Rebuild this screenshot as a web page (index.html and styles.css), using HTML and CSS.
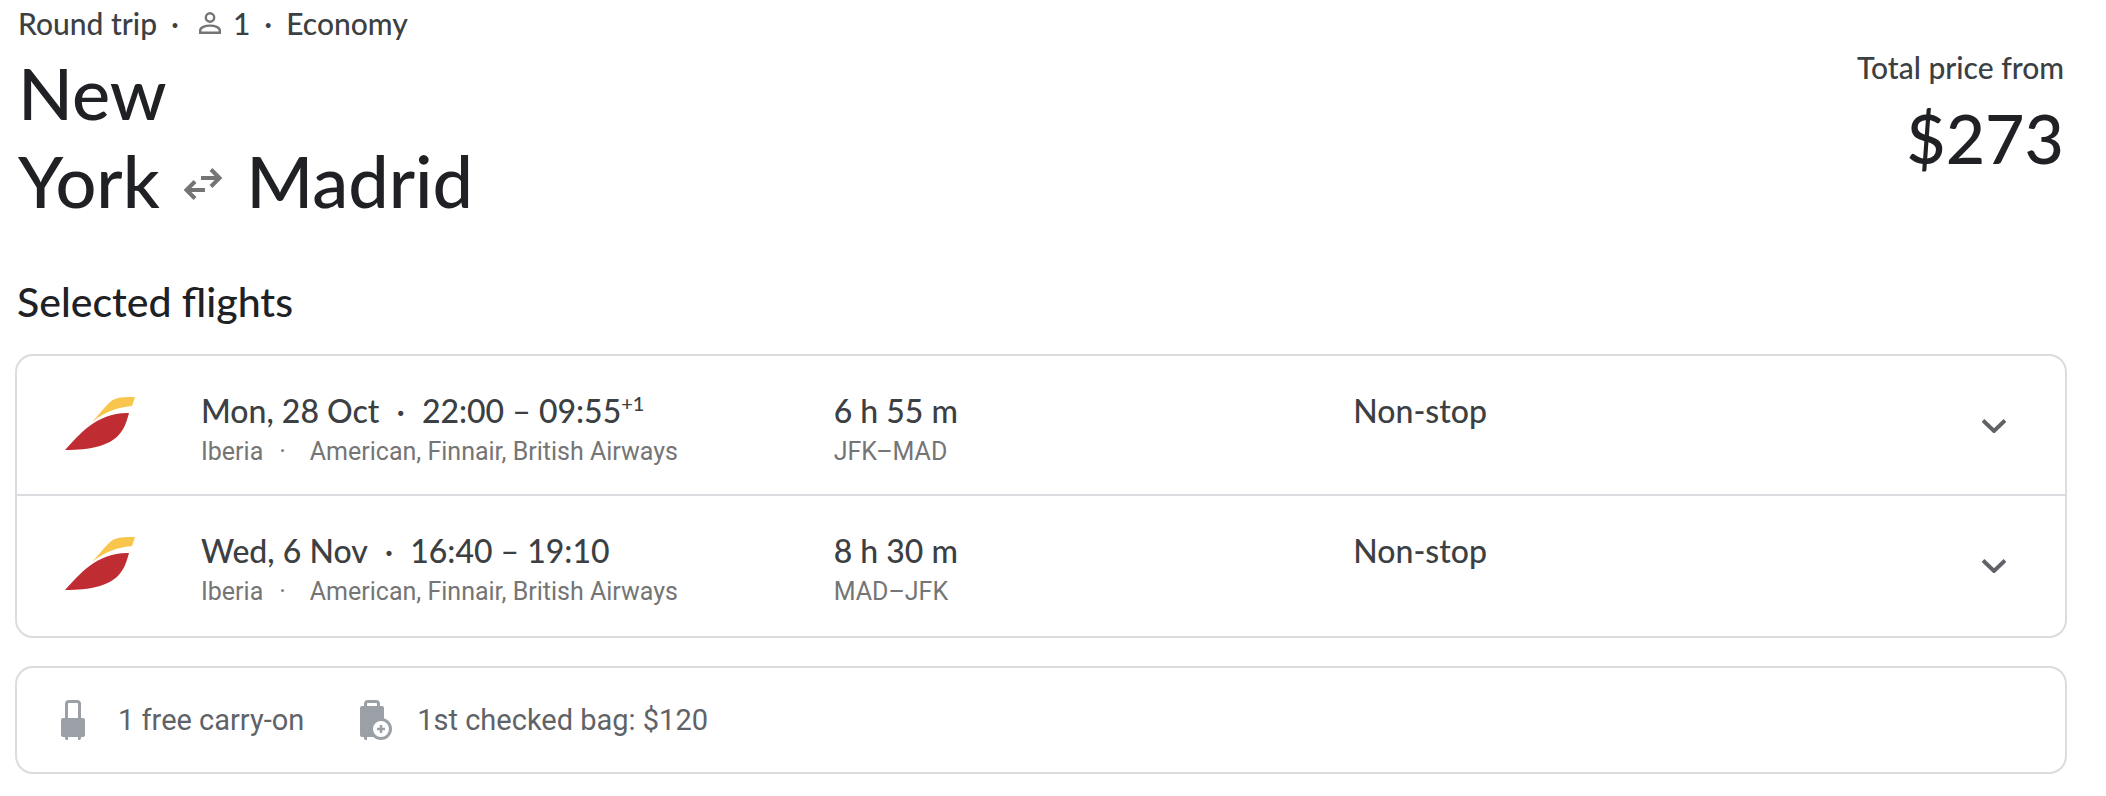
FILE: index.html
```
<!doctype html>
<html lang="en">
  <head>
    <meta charset="utf-8">
    <meta name="viewport" content="width=device-width, initial-scale=1.0">
    <title>New York to Madrid</title>
    <link rel="stylesheet" href="styles.css">
  </head>
  <body>
    <svg class="sprite" width="0" height="0" aria-hidden="true">
      <symbol id="iberia" viewBox="0 0 70 53">
        <path fill="#bf2c32" d="M0 53C14 38 32 15 64 16C59 34 54 53 0 53Z"/>
        <path fill="#f8c64c" d="M27 25C38 13 44 4 50 2C55 0 62 0 70 0L67 9C51 11 41 14 27 25Z"/>
      </symbol>
      <symbol id="chevron" viewBox="0 0 24 14">
        <path fill="none" stroke="#5f6368" stroke-width="4" d="M1 1.500L12 12L23 1.500"/>
      </symbol>
    </svg>

    <header class="trip">
      <div class="trip-info">
        <div class="meta">
          <span>Round trip</span>
          <span class="dot">·</span>
          <span class="people">
            <svg width="22" height="22" viewBox="0 0 22 22" fill="none" stroke="#757575" stroke-width="2.400"><circle cx="11" cy="5.500" r="4.200"/><path d="M1.200 20.800V18.500C1.200 12 20.800 12 20.800 18.500V20.800Z"/></svg>
            1
          </span>
          <span class="dot">·</span>
          <span>Economy</span>
        </div>
        <h1 class="route">New<br>York
          <svg class="swap" width="40" height="40" viewBox="0 0 40 40" fill="none" stroke="#757575" stroke-width="4"><path d="M18 10H37M28 1.500L36.500 10L28 18.500M22 22H3M12 13.500L3.500 22L12 30.500"/></svg>
          Madrid</h1>
      </div>
      <div class="total">
        <div class="total-label">Total price from</div>
        <div class="total-price">$273</div>
      </div>
    </header>

    <h2 class="section-title">Selected flights</h2>

    <div class="card">
      <div class="flight">
        <svg class="logo" width="70" height="53"><use href="#iberia"/></svg>
        <div class="cell">
          <div class="main">Mon, 28 Oct<span class="dot">·</span>22:00 – 09:55<sup>+1</sup></div>
          <div class="sub">Iberia<span class="sub-dot">·</span>American, Finnair, British Airways</div>
        </div>
        <div class="cell">
          <div class="main">6 h 55 m</div>
          <div class="sub">JFK–MAD</div>
        </div>
        <div class="cell">
          <div class="main">Non-stop</div>
        </div>
        <button class="toggle" type="button" aria-label="Show outbound flight details"><svg width="24" height="14"><use href="#chevron"/></svg></button>
      </div>
      <div class="flight">
        <svg class="logo" width="70" height="53"><use href="#iberia"/></svg>
        <div class="cell">
          <div class="main">Wed, 6 Nov<span class="dot">·</span>16:40 – 19:10</div>
          <div class="sub">Iberia<span class="sub-dot">·</span>American, Finnair, British Airways</div>
        </div>
        <div class="cell">
          <div class="main">8 h 30 m</div>
          <div class="sub">MAD–JFK</div>
        </div>
        <div class="cell">
          <div class="main">Non-stop</div>
        </div>
        <button class="toggle" type="button" aria-label="Show return flight details"><svg width="24" height="14"><use href="#chevron"/></svg></button>
      </div>
    </div>

    <div class="card bags">
      <div class="bag">
        <svg width="32" height="40" viewBox="0 0 32 40" fill="#9aa0a6"><path fill="none" stroke="#9aa0a6" stroke-width="3" d="M5.500 20V4Q5.500 1.500 8 1.500H16Q18.500 1.500 18.500 4V20"/><rect y="18" width="24" height="19" rx="2"/><path d="M4 36H7V40H5.500Q4 40 4 38ZM17 36H20V38Q20 40 18.500 40H17Z"/></svg>
        <span>1 free carry-on</span>
      </div>
      <div class="bag">
        <svg width="32" height="40" viewBox="0 0 32 40" fill="#9aa0a6"><path fill="none" stroke="#9aa0a6" stroke-width="3" d="M5.500 8V4Q5.500 1.500 8 1.500H16Q18.500 1.500 18.500 4V8"/><path d="M2 6H22Q24 6 24 8V37H2Q0 37 0 35V8Q0 6 2 6ZM4 36H7V40H5.500Q4 40 4 38Z"/><circle cx="21" cy="29" r="9.500" fill="#fff" stroke="#9aa0a6" stroke-width="3"/><path fill="none" stroke="#9aa0a6" stroke-width="2.500" d="M21 25V33M17 29H25"/></svg>
        <span>1st checked bag: $120</span>
      </div>
    </div>
  </body>
</html>
```
FILE: styles.css
```
*{
  box-sizing: border-box;
}
body{
  margin: 0;
  padding: 4px 39px 20px 15px;
  background: #fff;
  color: #3c4043;
  font-family: Lato, "Open Sans", sans-serif;
  font-weight: 500;
}
.sprite{
  position: absolute;
}
.trip{
  display: flex;
  justify-content: space-between;
  padding: 0 3px;
}
.meta{
  display: flex;
  align-items: center;
  font-size: 30px;
  line-height: 38px;
}
.dot{
  padding: 0 17px;
}
.meta .dot{
  padding: 0 14px;
}
.people{
  display: flex;
  align-items: center;
  gap: 12px;
  padding-left: 6px;
}
.route{
  margin: 6px 0 0;
  color: #202124;
  font-size: 72px;
  line-height: 88px;
  font-weight: 500;
}
.swap{
  margin: 0 5px;
}
.total{
  padding-top: 44px;
  text-align: right;
}
.total-label{
  font-size: 30px;
  line-height: 38px;
}
.total-price{
  color: #202124;
  font-size: 68px;
  line-height: 104px;
}
.section-title{
  margin: 54px 2px 28px;
  color: #202124;
  font-size: 41px;
  line-height: 48px;
  font-weight: 500;
}
.card{
  border: 2px solid #dadce0;
  border-radius: 18px;
}
.flight{
  display: grid;
  grid-template-columns: 136px 633fr 520fr 617fr 48px;
  align-items: start;
  min-height: 140px;
  padding: 35px 47px 0 48px;
}
.flight:first-child{
  border-bottom: 2px solid #dadce0;
}
.logo{
  margin-top: 6px;
}
.main{
  font-size: 32px;
  line-height: 40px;
}
.main sup{
  font-size: 20px;
  line-height: 20px;
}
.sub{
  color: #757575;
  font: 400 25px/42px Roboto, sans-serif;
}
.sub-dot{
  padding: 0 24px 0 16px;
}
.toggle{
  display: flex;
  align-items: center;
  justify-content: center;
  width: 48px;
  height: 48px;
  margin-top: 11px;
  padding: 0;
  border: 0;
  background: none;
  cursor: pointer;
}
.bags{
  display: flex;
  gap: 56px;
  margin-top: 28px;
  padding: 32px 44px;
}
.bag{
  display: flex;
  align-items: center;
  gap: 25px;
  color: #5f6368;
  font: 400 29px/40px Roboto, sans-serif;
}
```
